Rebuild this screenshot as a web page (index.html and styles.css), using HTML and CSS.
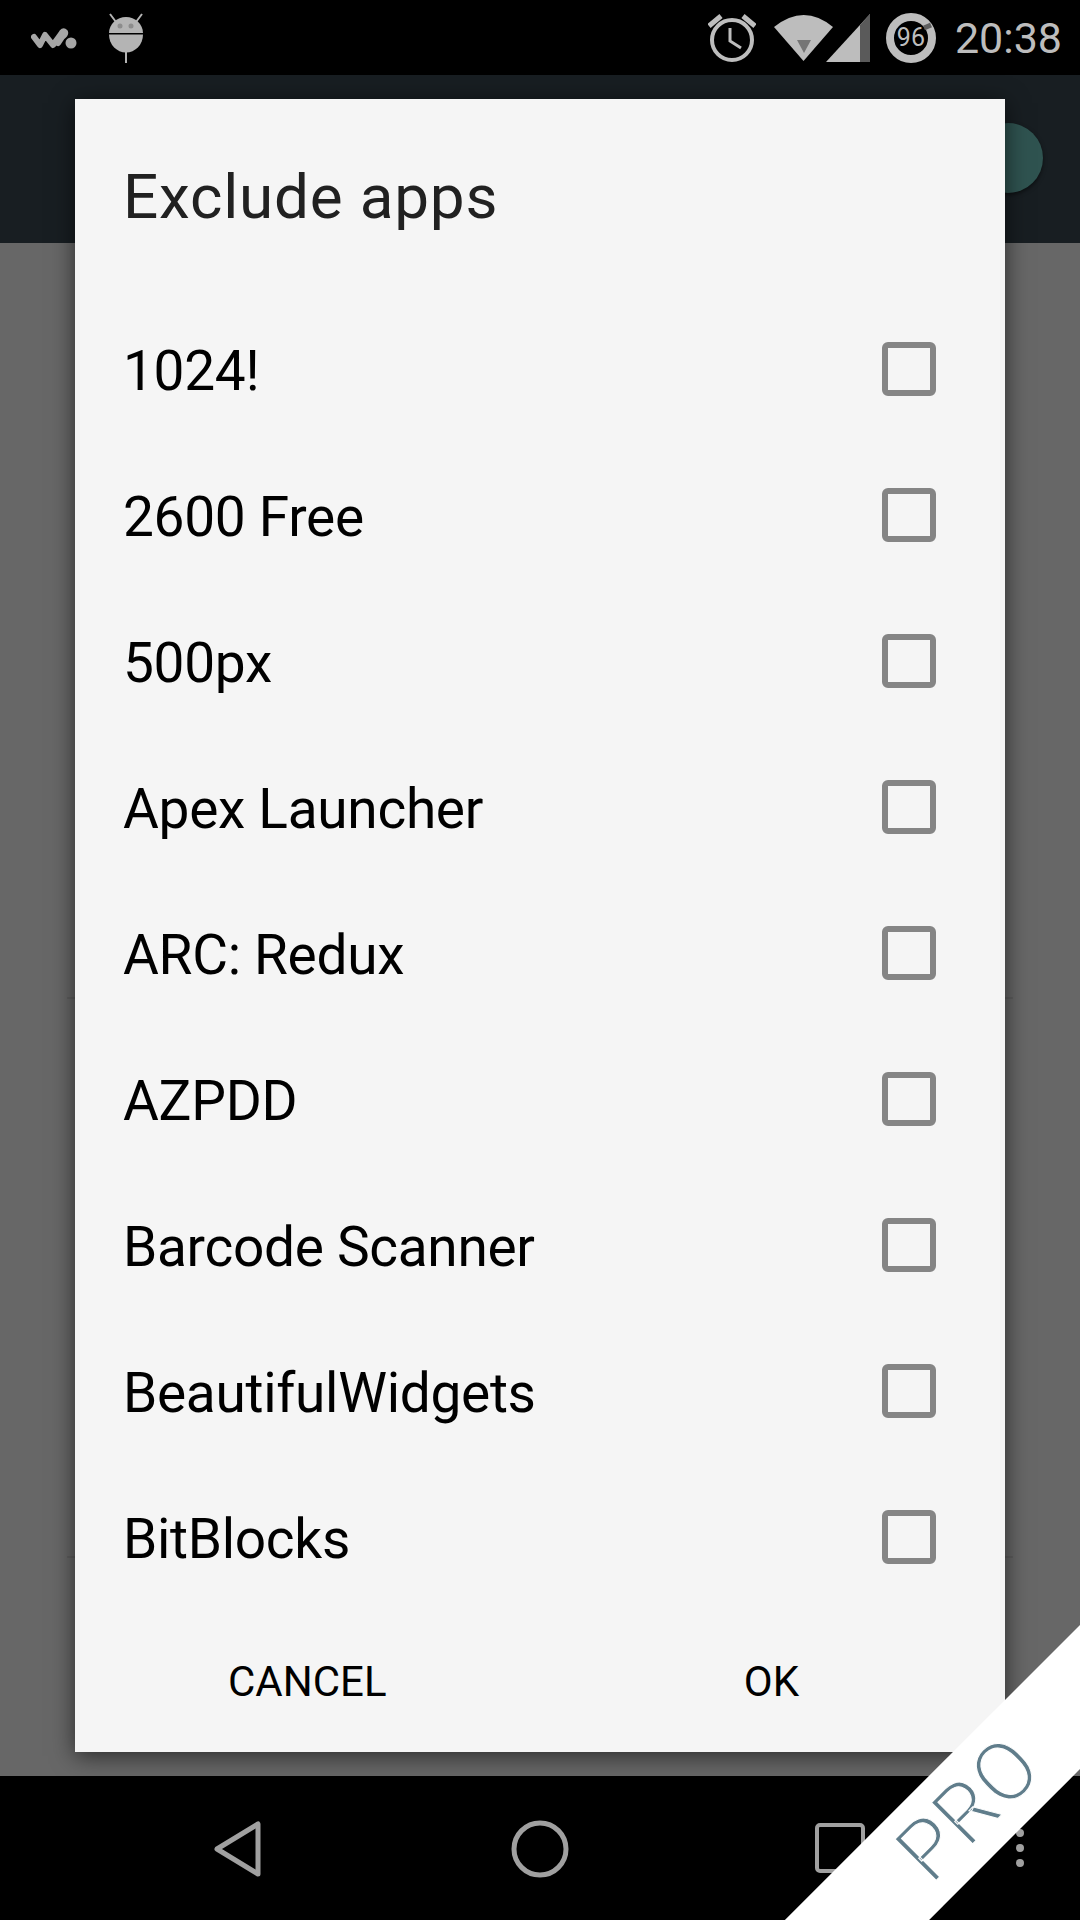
FILE: index.html
```html
<!DOCTYPE html>
<html lang="en">
<head>
  <meta charset="UTF-8">
  <title>Exclude apps</title>
  <link rel="stylesheet" href="styles.css">
</head>
<body>
  <div class="statusbar">
    <div class="status-left">
      <svg class="ic-walkman" viewBox="0 0 48 24" width="48" height="24">
        <path d="M3 11 L9 19 L14 9 L22 19 L30 8 Q32 4 34 6 Q35 8 31 11 L27 17" fill="none" stroke="#a6a6a6" stroke-width="6" stroke-linecap="round" stroke-linejoin="round"/>
        <circle cx="40" cy="17" r="5.5" fill="#a6a6a6"/>
      </svg>
      <svg class="ic-android" viewBox="0 0 36 50" width="36" height="50">
        <path d="M2 1 L8 9 M34 1 L28 9" stroke="#b4b4b4" stroke-width="2"/>
        <path d="M1 20 A17 16 0 0 1 35 20 Z" fill="#b4b4b4"/>
        <path d="M1 21.5 H35 A17 18 0 0 1 1 21.5 Z" fill="#b4b4b4"/>
        <circle cx="12" cy="13" r="2.5" fill="#8c8c8c"/>
        <circle cx="23" cy="13" r="2.5" fill="#8c8c8c"/>
        <path d="M18 38 V50" stroke="#b4b4b4" stroke-width="2"/>
      </svg>
    </div>
    <div class="status-right">
      <svg class="ic-alarm" viewBox="0 0 48 50" width="48" height="50">
        <circle cx="24" cy="27" r="20" fill="none" stroke="#bdbdbd" stroke-width="4"/>
        <path d="M22 15 V28 L33 35" fill="none" stroke="#bdbdbd" stroke-width="3"/>
        <path d="M1 13 L13 3 M47 13 L35 3" stroke="#bdbdbd" stroke-width="5"/>
      </svg>
      <svg class="ic-wifi" viewBox="0 0 59 46" width="59" height="46">
        <path d="M0 12 Q30 -12 59 12 L29.5 46 Z" fill="#bdbdbd"/>
        <path d="M23 25 H37 L30 38 Z" fill="#757575"/>
      </svg>
      <svg class="ic-signal" viewBox="0 0 44 48" width="44" height="48">
        <path d="M0 48 L44 0 V48 Z" fill="#bdbdbd"/>
        <path d="M34 11 L44 0 V48 H34 Z" fill="#5a5a5a"/>
      </svg>
      <div class="battery">
        <svg viewBox="0 0 50 50" width="50" height="50">
          <circle cx="25" cy="25" r="21" fill="none" stroke="#bdbdbd" stroke-width="8"/>
          <path d="M38 15 L45 12" stroke="#5e5e5e" stroke-width="5"/>
        </svg>
        <span>96</span>
      </div>
      <span class="clock">20:38</span>
    </div>
  </div>

  <div class="appbar"><div class="fab"></div></div>
  <div class="content">
    <div class="bg-row bg-row-first"></div>
    <div class="bg-row bg-row-second"></div>
  </div>
  <div class="navbar">
    <svg class="nav-back" viewBox="0 0 52 58" width="52" height="58">
      <path d="M46 4 V54 L5 29 Z" fill="none" stroke="#a0a0a0" stroke-width="5" stroke-linejoin="round"/>
    </svg>
    <svg class="nav-home" viewBox="0 0 58 58" width="58" height="58">
      <circle cx="29" cy="29" r="26" fill="none" stroke="#a0a0a0" stroke-width="5"/>
    </svg>
    <svg class="nav-recent" viewBox="0 0 50 50" width="50" height="50">
      <rect x="2" y="2" width="46" height="46" rx="3" fill="none" stroke="#a0a0a0" stroke-width="4"/>
    </svg>
    <div class="nav-more"><i></i><i></i><i></i></div>
  </div>

  <div class="dialog">
    <h2 class="dialog-title">Exclude apps</h2>
    <div class="app-list">
      <div class="app-row"><span>1024!</span><div class="checkbox"></div></div>
      <div class="app-row"><span>2600 Free</span><div class="checkbox"></div></div>
      <div class="app-row"><span>500px</span><div class="checkbox"></div></div>
      <div class="app-row"><span>Apex Launcher</span><div class="checkbox"></div></div>
      <div class="app-row"><span>ARC: Redux</span><div class="checkbox"></div></div>
      <div class="app-row"><span>AZPDD</span><div class="checkbox"></div></div>
      <div class="app-row"><span>Barcode Scanner</span><div class="checkbox"></div></div>
      <div class="app-row"><span>BeautifulWidgets</span><div class="checkbox"></div></div>
      <div class="app-row"><span>BitBlocks</span><div class="checkbox"></div></div>
    </div>
    <div class="dialog-actions">
      <span class="action">CANCEL</span>
      <span class="action">OK</span>
    </div>
  </div>

  <div class="corner">
    <div class="ribbon"><span>PRO</span></div>
  </div>
</body>
</html>
```

FILE: styles.css
```css
html, body {
  margin: 0;
  padding: 0;
}
body {
  position: relative;
  width: 1080px;
  height: 1920px;
  overflow: hidden;
  display: flex;
  flex-direction: column;
  font-family: Roboto, sans-serif;
  background: #000;
}
.statusbar {
  height: 75px;
  background: #000;
  display: flex;
  justify-content: space-between;
  align-items: center;
}
.status-left {
  display: flex;
  align-items: center;
  gap: 29px;
  padding-left: 31px;
}
.status-right {
  display: flex;
  align-items: center;
  padding-right: 18px;
}
.ic-alarm {
  margin-right: 18px;
}
.ic-signal {
  margin-left: -7px;
  margin-right: 16px;
}
.battery {
  position: relative;
  width: 50px;
  height: 50px;
  display: flex;
  align-items: center;
  justify-content: center;
  color: #bdbdbd;
  font-size: 25px;
  margin-right: 19px;
}
.battery svg {
  position: absolute;
  left: 0;
  top: 0;
}
.clock {
  color: #bdbdbd;
  font-size: 43px;
}
.appbar {
  position: relative;
  height: 168px;
  background: #181e22;
}
.fab {
  position: absolute;
  left: 973px;
  top: 48px;
  width: 70px;
  height: 70px;
  border-radius: 50%;
  background: #2f5350;
  box-shadow: 0 2px 4px rgba(0,0,0,0.5);
}
.content {
  height: 1533px;
  background: #676767;
  padding: 0 67px;
  box-sizing: border-box;
}
.bg-row {
  border-bottom: 2px solid #5e5e5e;
}
.bg-row-first {
  height: 754px;
}
.bg-row-second {
  height: 557px;
}
.navbar {
  position: relative;
  flex: 1;
  background: #000;
}
.nav-back { position: absolute; left: 212px; top: 44px; }
.nav-home { position: absolute; left: 511px; top: 44px; }
.nav-recent { position: absolute; left: 815px; top: 47px; }
.nav-more { position: absolute; left: 1016px; top: 53px; display: flex; flex-direction: column; gap: 7px; }
.nav-more i {
  display: block;
  width: 8px;
  height: 8px;
  border-radius: 50%;
  background: #a0a0a0;
}
.dialog {
  position: absolute;
  left: 75px;
  top: 99px;
  width: 930px;
  height: 1653px;
  background: #f5f5f5;
  box-shadow: 0 4px 22px rgba(0,0,0,0.6);
  display: flex;
  flex-direction: column;
}
.dialog-title {
  margin: 0;
  height: 197px;
  padding: 52px 0 0 48px;
  box-sizing: border-box;
  font-size: 62px;
  line-height: 92px;
  letter-spacing: 0.8px;
  font-weight: 400;
  color: #212121;
}
.app-row {
  height: 146px;
  display: flex;
  align-items: center;
  justify-content: space-between;
  padding: 0 69px 0 48px;
  font-size: 55px;
  letter-spacing: -0.3px;
  color: #000;
}
.app-row span {
  padding-top: 3px;
}
.checkbox {
  width: 54px;
  height: 54px;
  box-sizing: border-box;
  border: 6px solid #858585;
  border-radius: 6px;
}
.dialog-actions {
  flex: 1;
  display: flex;
  justify-content: space-between;
  align-items: center;
  padding: 0 206px 0 153px;
}
.action {
  font-size: 42px;
  color: #000;
}
.corner {
  position: absolute;
  left: 640px;
  top: 1620px;
  width: 440px;
  height: 300px;
  overflow: hidden;
}
.ribbon {
  position: absolute;
  left: 24px;
  top: 142px;
  width: 600px;
  height: 102px;
  box-sizing: border-box;
  padding-left: 12px;
  background: #fff;
  transform: rotate(-45deg);
  display: flex;
  align-items: center;
  justify-content: center;
}
.ribbon span {
  font-size: 82px;
  font-weight: 300;
  letter-spacing: 1px;
  color: #607d8b;
  -webkit-text-stroke: 1px #fff;
}
```
